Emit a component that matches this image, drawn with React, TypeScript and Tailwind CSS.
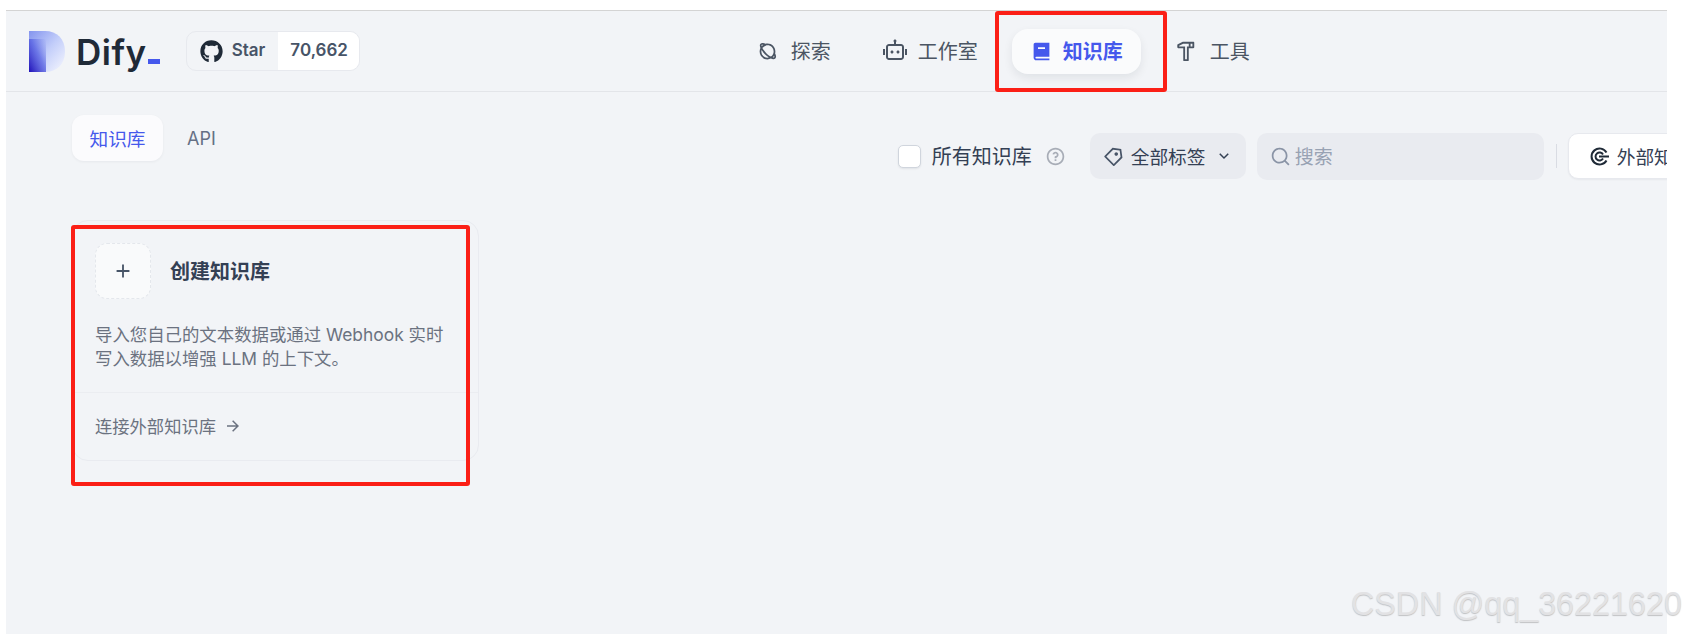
import { FaGithub } from 'react-icons/fa'
import {
  RiPlanetLine, RiRobot2Line, RiBook2Fill, RiHammerLine, RiPriceTag3Line,
  RiQuestionLine, RiSearchLine, RiArrowDownSLine, RiAddLine, RiArrowRightLine
} from 'react-icons/ri'

function Logo() {
  return (
    <svg width="36" height="41" viewBox="0 0 36 41" className="shrink-0">
      <defs>
        <linearGradient id="dBody" x1="0" y1="0" x2="1" y2="1">
          <stop offset="0" stopColor="#8494ee" />
          <stop offset="0.5" stopColor="#c3cefa" />
          <stop offset="1" stopColor="#f7f8fe" />
        </linearGradient>
        <linearGradient id="dStem" x1="1" y1="0" x2="0" y2="1">
          <stop offset="0" stopColor="#6f7de8" stopOpacity="0" />
          <stop offset="0.45" stopColor="#5560e2" stopOpacity="0.75" />
          <stop offset="1" stopColor="#1f10b8" />
        </linearGradient>
      </defs>
      <path d="M0 0h16c12 0 20 8 20 20.500S28 41 16 41H0z" fill="url(#dBody)" />
      <path d="M0 8h17v33H0z" fill="url(#dStem)" />
    </svg>
  )
}

function ConnectIcon() {
  return (
    <svg width="21" height="21" viewBox="0 0 21 21" fill="none" stroke="#1f2a37" strokeWidth="2" className="shrink-0">
      <path d="M17.500 6.500a8 8 0 1 0 0 8" />
      <path d="M14 8.500a4 4 0 1 0 0 4" />
      <path d="M10 10.500h10" />
    </svg>
  )
}

export default function App() {
  return (
    <div className="relative h-[634px] w-[1687px] overflow-hidden bg-white font-['Noto_Sans_CJK_SC',sans-serif] whitespace-nowrap">
      <div className="ml-[6px] mr-[20px] mt-[10px] h-[624px] overflow-hidden border-t border-[#d4d4d4] bg-[#f2f4f7]">
        {/* Header */}
        <header className="flex h-[81px] items-center border-b border-[#e3e5e9]">
          <div className="ml-[23px]"><Logo /></div>
          <div className="ml-[11px] flex items-end pt-[2px] font-['Inter',sans-serif] text-[35px] font-semibold leading-none tracking-[0.5px] text-[#1f2a37]">
            Dify
            <span className="mb-[6px] ml-[1px] h-[5px] w-[12px] bg-[#4558ec]" />
          </div>

          <div className="ml-[26px] flex h-[40px] w-[174px] shrink-0 overflow-hidden rounded-[10px] border border-[#e7e9ee] font-['Inter',sans-serif] text-[17px] font-semibold text-[#475467]">
            <div className="flex w-[91px] items-center gap-[9px] pl-[13px]">
              <FaGithub size={23} className="text-[#1f2a37]" />
              Star
            </div>
            <div className="flex flex-1 items-center justify-center pl-[2px] bg-white">70,662</div>
          </div>

          <nav className="ml-[397px] flex items-center text-[20px] text-[#4b5563]">
            <div className="flex items-center gap-[13px]">
              <RiPlanetLine size={21} />
              探索
            </div>
            <div className="ml-[52px] flex items-center gap-[11px]">
              <RiRobot2Line size={24} />
              工作室
            </div>
            <div className="ml-[34px] flex h-[45px] w-[129px] shrink-0 items-center gap-[11px] rounded-[16px] bg-[#fafbfc] pl-[19px] font-semibold text-[#4558ec] shadow-[0_4px_10px_rgba(16,24,40,0.08)]">
              <RiBook2Fill size={21} />
              知识库
            </div>
            <div className="ml-[34px] flex items-center gap-[13px]">
              <RiHammerLine size={22} />
              工具
            </div>
          </nav>
        </header>

        {/* Tabs and filters */}
        <div className="flex items-start pl-[66px] pt-[23px]">
          <div className="flex h-[46px] w-[91px] shrink-0 items-center justify-center rounded-[12px] bg-[#fbfbfd] text-[18.700px] text-[#4558ec] shadow-[0_1px_3px_rgba(16,24,40,0.05)]">
            知识库
          </div>
          <div className="ml-[24px] flex h-[46px] items-center font-['Inter',sans-serif] text-[18px] text-[#667085]">API</div>

          <div className="ml-[682px] mt-[17px] flex shrink-0 items-center text-[20px] text-[#344054]">
            <span className="h-[23px] w-[23px] shrink-0 rounded-[5px] border border-[#d0d5dd] bg-white shadow-[0_1px_2px_rgba(16,24,40,0.08)]" />
            <span className="ml-[11px]">所有知识库</span>
            <RiQuestionLine size={21} className="ml-[13px] text-[#a8adb7]" />
            <div className="ml-[24px] flex h-[46px] w-[156px] shrink-0 items-center rounded-[10px] bg-[#e9ebf0] pl-[13px] text-[18.700px]">
              <RiPriceTag3Line size={21} className="text-[#475467]" />
              <span className="ml-[7px]">全部标签</span>
              <RiArrowDownSLine size={18} className="ml-[9px]" />
            </div>
            <div className="ml-[11px] mt-[1px] flex h-[47px] w-[287px] shrink-0 items-center rounded-[10px] bg-[#e9ebf0] pl-[13px] text-[19px] text-[#98a2b3]">
              <RiSearchLine size={21} className="text-[#8a94a6]" />
              <span className="ml-[4px]">搜索</span>
            </div>
            <span className="ml-[12px] h-[24px] w-px shrink-0 bg-[#d9dce3]" />
            <div className="ml-[11px] flex h-[46px] w-[140px] shrink-0 items-center rounded-[10px] border border-[#e7e9ee] bg-white pl-[20px] text-[18.700px] shadow-[0_1px_2px_rgba(16,24,40,0.05)]">
              <ConnectIcon />
              <span className="ml-[7px]">外部知识库</span>
            </div>
          </div>
        </div>

        {/* Create card */}
        <div className="ml-[66px] mt-[40px] flex h-[241px] w-[407px] flex-col rounded-[16px] border border-[#e9ebf0]">
          <div className="ml-[22px] mt-[22px] flex items-center">
            <div className="flex h-[56px] w-[56px] items-center justify-center rounded-[12px] border border-dashed border-[#e4e7ec] bg-[#f9fafb]">
              <RiAddLine size={22} className="text-[#475467]" />
            </div>
            <span className="ml-[19px] text-[20px] font-semibold text-[#344054]">创建知识库</span>
          </div>
          <p className="ml-[22px] mt-[24px] font-['Inter','Noto_Sans_CJK_SC',sans-serif] text-[17.400px] leading-[24px] text-[#6b7280]">
            导入您自己的文本数据或通过 Webhook 实时<br />
            写入数据以增强 LLM 的上下文。
          </p>
          <div className="mt-[21px] border-t border-[#ebedf1]" />
          <div className="ml-[22px] mt-[21px] flex items-center gap-[8px] text-[17.300px] leading-[24px] text-[#6b7280]">
            连接外部知识库
            <RiArrowRightLine size={18} />
          </div>
        </div>
      </div>

      {/* Red annotation frames */}
      <div className="absolute left-[995px] top-[11px] h-[81px] w-[172px] rounded-[3px] border-[4px] border-[#fb1f16]" />
      <div className="absolute left-[71px] top-[225px] h-[261px] w-[399px] rounded-[3px] border-[4px] border-[#fb1f16]" />

      {/* Watermark */}
      <span className="absolute left-[1351px] top-[585px] font-['Liberation_Sans',sans-serif] text-[32.300px] leading-[38px] text-[#e2e2e4] [text-shadow:0_1px_1px_rgba(120,120,120,0.4)]">
        CSDN @qq_36221620
      </span>
    </div>
  )
}
